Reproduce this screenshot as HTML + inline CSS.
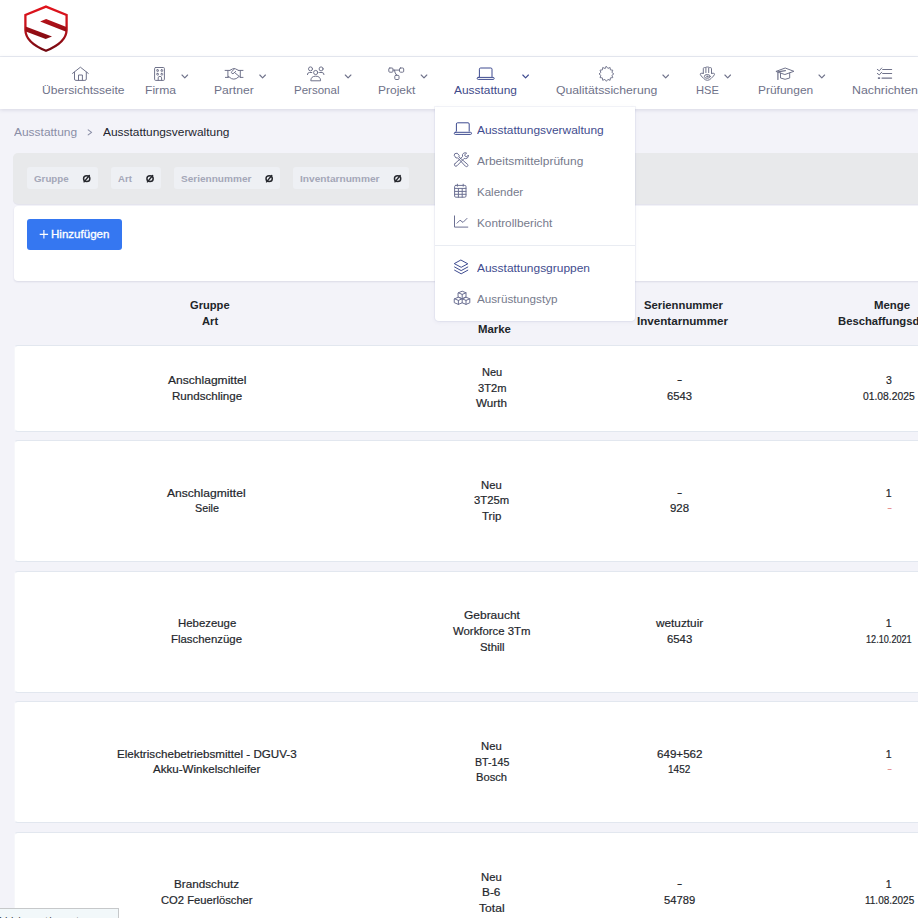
<!DOCTYPE html>
<html lang="de">
<head>
<meta charset="utf-8">
<title>Ausstattungsverwaltung</title>
<style>
html,body{margin:0;padding:0;}
body{width:918px;height:918px;overflow:hidden;position:relative;background:#f3f3f9;font-family:"Liberation Sans",sans-serif;}
.abs{position:absolute;}
.t{position:absolute;white-space:pre;line-height:1;transform-origin:0 50%;font-family:"Liberation Sans",sans-serif;}
#hdr{left:0;top:0;width:918px;height:56px;background:#fff;border-bottom:1px solid #e9ecf2;}
#nav{left:0;top:57px;width:918px;height:52px;background:#fff;box-shadow:0 1px 4px rgba(70,70,120,.16);}
#filt{left:13.4px;top:153px;width:930px;height:50.5px;background:#e8e9eb;border-radius:5px;box-shadow:0 1px 0 rgba(120,120,160,.12);}
.chip{position:absolute;top:167px;height:21.5px;background:#eef0f4;border-radius:3px;}
#card{left:14px;top:205.8px;width:930px;height:75.2px;background:#fff;border-radius:4px;box-shadow:0 1px 2px rgba(70,70,120,.14);}
#btn{left:27px;top:219px;width:95px;height:31px;background:#3577f1;border-radius:3px;}
.row{position:absolute;left:14px;width:930px;background:#fff;border-top:1px solid #e2e7ef;border-bottom:1px solid #e2e7ef;border-left:1px solid #f6f7fa;border-radius:4px;box-sizing:border-box;}
#thline{left:0;top:344.6px;width:918px;height:1px;background:#dfe5ee;}
#dd{left:435px;top:107px;width:200px;height:213.5px;background:#fff;border-radius:0 0 4px 4px;box-shadow:0 0 0 1px rgba(170,175,210,.13),0 1px 4px rgba(90,90,140,.09);z-index:20;}
#ddline{left:435px;top:245px;width:200px;height:1px;background:#e9ecf2;z-index:21;}
#status{left:-1px;top:908px;width:120px;height:12px;overflow:hidden;background:#f2f8fa;border:1px solid #c6c8ca;box-sizing:border-box;z-index:40;}
.st{position:absolute;top:6.5px;font:11px/1 'Liberation Sans',sans-serif;color:#3a3a3a;white-space:pre;}
svg{position:absolute;overflow:visible;}
.ic{fill:none;stroke:#70738b;stroke-width:1.0;stroke-linecap:round;stroke-linejoin:round;}
.ica{fill:none;stroke:#3e4b90;stroke-width:1.0;stroke-linecap:round;stroke-linejoin:round;}
.icd{fill:none;stroke:#6c7093;stroke-width:1.0;stroke-linecap:round;stroke-linejoin:round;}
</style>
</head>
<body>
<div id="hdr" class="abs"></div>
<div id="nav" class="abs"></div>
<!--LOGO-->
<svg class="abs" style="left:0;top:0" width="918" height="918" viewBox="0 0 918 918">
<defs>
<linearGradient id="lg" x1="0" y1="0" x2="0" y2="1"><stop offset="0" stop-color="#e3131c"/><stop offset="0.45" stop-color="#c5121b"/><stop offset="1" stop-color="#6e0810"/></linearGradient>
<linearGradient id="lg2" gradientUnits="userSpaceOnUse" x1="0" y1="5" x2="0" y2="52"><stop offset="0" stop-color="#e3131c"/><stop offset="0.45" stop-color="#c5121b"/><stop offset="1" stop-color="#6e0810"/></linearGradient>
<linearGradient id="lg3" gradientUnits="userSpaceOnUse" x1="0" y1="18" x2="0" y2="40"><stop offset="0" stop-color="#b9121a"/><stop offset="1" stop-color="#7f0a11"/></linearGradient>
</defs>
<!-- logo -->
<path d="M46,6.6 L66.6,15 L66.6,30 Q66.4,42.5 46,50.8 Q25.6,42.5 25.4,30 L25.4,15 Z" fill="none" stroke="url(#lg2)" stroke-width="2.3" stroke-linejoin="miter"/>
<path d="M40.1,21.6 L46.1,19 L66.4,27 L66.2,31.8 Z" fill="url(#lg3)"/>
<path d="M25.6,26.6 L52,36.6 L45.7,38.9 L25.8,31.6 Z" fill="url(#lg3)"/>
<!-- chevrons -->
<g class="ic" style="stroke-width:1.15">
<path d="M182,75 l2.8,2.8 l2.8,-2.8"/>
<path d="M259.8,75 l2.8,2.8 l2.8,-2.8"/>
<path d="M345.3,75 l2.8,2.8 l2.8,-2.8"/>
<path d="M421.2,75 l2.8,2.8 l2.8,-2.8"/>
<path d="M662.9,75 l2.8,2.8 l2.8,-2.8"/>
<path d="M724.9,75 l2.8,2.8 l2.8,-2.8"/>
<path d="M819,75 l2.8,2.8 l2.8,-2.8"/>
</g>
<path class="ica" style="stroke-width:1.15" d="M522.8,75 l2.8,2.8 l2.8,-2.8"/>
<!-- home -->
<g class="ic">
<path d="M72.5,73.4 L80.4,67.2 L88.3,73.4"/>
<path d="M74.5,72.2 V79 Q74.5,80.4 75.9,80.4 H84.9 Q86.3,80.4 86.3,79 V72.2"/>
<path d="M78.5,80.4 V75 H82.4 V80.4"/>
</g>
<!-- firma -->
<g class="ic">
<rect x="154.6" y="67.5" width="9.8" height="12.9" rx="1"/>
<path d="M158.2,80.4 V77.8 Q158.2,76.4 159.9,76.4 Q161.6,76.4 161.6,77.8 V80.4"/>
<g style="stroke-width:.9"><rect x="156.8" y="69.7" width="1.7" height="1.7" rx=".4"/><rect x="161" y="69.7" width="1.7" height="1.7" rx=".4"/><rect x="156.8" y="73.4" width="1.7" height="1.7" rx=".4"/><rect x="161" y="73.4" width="1.7" height="1.7" rx=".4"/></g>
</g>
<!-- partner (handshake) -->
<g class="ic">
<path d="M225.1,70.4 H229.8 M227.9,70.4 V77.4 M225.4,77.4 H228.4"/>
<path d="M238.5,70.4 H243 M240.3,70.4 V77.4 M240.3,77.4 H243"/>
<path d="M229.8,70.4 L232.6,68.9 Q234,68.3 235.4,68.8 L238.5,70.4"/>
<path d="M234.4,69 L231.7,71.6 Q231,72.8 232,73.5 Q233,74 234,73 L235.6,71.4"/>
<path d="M234.7,72.6 L239.2,76.4"/>
<path d="M228.4,76.4 L231.6,78.7 Q233.8,79.6 236.2,78.6 L239.2,76.4"/>
</g>
<!-- personal (users) -->
<g class="ic">
<circle cx="310.5" cy="68.9" r="2"/><circle cx="321.1" cy="68.9" r="2"/><circle cx="315.7" cy="72.5" r="2.1"/>
<path d="M311.8,72.5 H309.4 Q307.4,72.5 307.4,74.6"/>
<path d="M319.6,72.5 H322 Q324,72.5 324,74.6"/>
<path d="M310.8,80.4 Q310.8,76.2 315.7,76.2 Q320.6,76.2 320.6,80.4 Z"/>
</g>
<!-- projekt -->
<g class="ic">
<rect x="388.8" y="68" width="4.2" height="4.2" rx="1"/>
<rect x="399.5" y="68" width="4.2" height="4.2" rx="1"/>
<rect x="394.8" y="75.3" width="4.2" height="4.2" rx="1"/>
<path d="M393,70.1 H399.5 M394.4,70.1 Q394.6,73.4 396.9,75.3"/>
</g>
<!-- ausstattung laptop -->
<g class="ica">
<path d="M479.4,76.6 V69.2 Q479.4,68 480.6,68 H490.8 Q492,68 492,69.2 V76.6"/>
<rect x="477.2" y="77.4" width="17" height="2" rx="1"/>
</g>
<!-- qualitaet badge -->
<g class="ic">
<path d="M606.4,66.5 L607.9,68.4 L610.1,67.5 L610.4,69.9 L612.8,70.2 L611.9,72.4 L613.8,73.9 L611.9,75.4 L612.8,77.6 L610.4,77.9 L610.1,80.3 L607.9,79.4 L606.4,81.3 L604.9,79.4 L602.7,80.3 L602.4,77.9 L600.0,77.6 L600.9,75.4 L599.0,73.9 L600.9,72.4 L600.0,70.2 L602.4,69.9 L602.7,67.5 L604.9,68.4 Z" style="stroke-width:.95"/>
</g>
<!-- hse hamsa -->
<g class="ic">
<path d="M703.3,73.3 V68.6 Q703.3,67.6 704.4,67.6 L705.2,67.6 Q706,67 707.4,67 Q708.8,67 709.6,67.6 L710.4,67.6 Q711.5,67.6 711.5,68.6 V73.3"/>
<path d="M705.9,68 V72.6 M708.7,68 V72.6"/>
<path d="M703.3,73.3 H701.2 Q700.2,73.3 700.3,74.4 Q700.6,75.6 703.6,78.4 Q705.4,80.3 707.4,80.3 Q709.4,80.3 711.2,78.4 Q714.2,75.6 714.5,74.4 Q714.6,73.3 713.6,73.3 H711.5"/>
<ellipse cx="707.3" cy="76.4" rx="2.9" ry="1.9"/>
<circle cx="707.3" cy="76.4" r="0.6"/>
</g>
<!-- pruefungen cap -->
<g class="ic">
<path d="M776.3,71.3 L785.2,68 L793.9,71.3 L785.2,74.4 Z"/>
<path d="M785.4,70.6 L777.9,71.8 V79.4" style="stroke-width:1.2"/>
<path d="M780.5,73 V78 Q785.1,80.6 789.7,78 V73"/>
</g>
<!-- nachrichten list -->
<g class="ic">
<path d="M882.7,69.5 H891.6 M882.7,73.5 H891.6 M882,78.1 H891.6" style="stroke-width:1.2"/>
<path d="M877.3,69.4 L879.3,70.8 L881.7,68 M877.3,73.4 L879.3,74.9 L881.7,72.2"/>
<path d="M878.6,78.1 h0.8" style="stroke-width:1.7"/>
</g>
<!-- breadcrumb chevron -->
<path d="M88.2,129.9 L91.6,132.4 L88.2,134.9" fill="none" stroke="#8a8ea6" stroke-width="1.1" stroke-linecap="round" stroke-linejoin="round"/>
</svg>

<div id="filt" class="abs"></div>
<div class="chip" style="left:26.75px;width:70.75px"></div>
<div class="chip" style="left:110.75px;width:49.75px"></div>
<div class="chip" style="left:173.5px;width:106.5px"></div>
<div class="chip" style="left:293px;width:116px"></div>
<div id="card" class="abs"></div>
<div id="btn" class="abs"></div>
<svg id="plus" style="left:0;top:0" width="918" height="300"><path d="M39.7,234.3 H48.1 M43.9,230.1 V238.5" stroke="#fff" stroke-width="1.15" fill="none"/>
<!-- chip reset icons -->
<g fill="none" stroke="#26282e" stroke-width="1.45" stroke-linecap="round">
<ellipse cx="86.70" cy="178.7" rx="3.15" ry="2.85"/><path d="M84.10,181.85 L89.30,175.55"/>
<ellipse cx="150.05" cy="178.7" rx="3.15" ry="2.85"/><path d="M147.45,181.85 L152.65,175.55"/>
<ellipse cx="269.15" cy="178.7" rx="3.15" ry="2.85"/><path d="M266.55,181.85 L271.75,175.55"/>
<ellipse cx="397.60" cy="178.7" rx="3.15" ry="2.85"/><path d="M395.00,181.85 L400.20,175.55"/>
</g>
</svg>
<div class="row" style="top:345px;height:87px"></div>
<div class="row" style="top:440.2px;height:121.8px"></div>
<div class="row" style="top:570.5px;height:122.3px"></div>
<div class="row" style="top:701px;height:121.8px"></div>
<div class="row" style="top:831.5px;height:121.8px"></div>
<div id="dd" class="abs"></div>
<div id="ddline" class="abs"></div>
<svg class="abs" style="left:0;top:0;z-index:30" width="918" height="918" viewBox="0 0 918 918">
<!-- laptop -->
<g class="ica">
<path d="M456.4,131.2 V124 Q456.4,122.8 457.6,122.8 H468 Q469.2,122.8 469.2,124 V131.2"/>
<rect x="454.3" y="132.3" width="17.2" height="2.1" rx="1"/>
</g>
<!-- tools -->
<g class="icd">
<path d="M455.2,153.6 L457.2,153.2 L459.2,155.4 L458.8,156.8 L467.6,164.4 Q468.4,165.6 467.4,166.4 Q466.4,167 465.4,166.2 L457.6,157.8 L456,158 L454.4,155.6 Z"/>
<path d="M454.8,163.8 L462.6,156.6 Q461.8,154.4 463.6,153.2 Q465.2,152.4 466.6,153 L464.6,155 L465.4,156.4 L466.8,156.8 L468.4,155 Q468.6,157 467.2,158.2 Q465.6,159 464.2,158.4 L457,165.8 Q455.8,166.8 454.8,165.8 Q454,164.8 454.8,163.8 Z"/>
</g>
<!-- calendar -->
<g class="icd">
<rect x="454.6" y="185.4" width="11.4" height="11.8" rx="1.2"/>
<path d="M454.6,188.4 H466 M454.6,191.4 H466 M454.6,194.3 H466 M458.4,188.4 V197.2 M462.2,188.4 V197.2"/>
<path d="M457.4,184.2 V186.2 M463.2,184.2 V186.2"/>
</g>
<!-- chart -->
<g class="icd">
<path d="M454.5,215.9 V227.1 H467.8"/>
<path d="M457,223.2 L460,220.2 L463,222.4 L467,218.4"/>
</g>
<!-- layers -->
<g class="ica">
<path d="M461.2,260.2 L467.8,263.8 L461.2,267.3 L454.6,263.8 Z"/>
<path d="M454.6,267 L461.2,270.6 L467.8,267"/>
<path d="M454.6,270.2 L461.2,273.8 L467.8,270.2"/>
</g>
<!-- cubes -->
<g class="icd">
<path d="M458.4,292.8 L462.2,291.2 L466,292.8 V297 L462.2,298.8 L458.4,297 Z M458.4,292.8 L462.2,294.4 L466,292.8 M462.2,294.4 V298.8"/>
<path d="M454.6,298.8 L458.4,297.2 L462.2,298.8 V302.8 L458.4,304.4 L454.6,302.8 Z M454.6,298.8 L458.4,300.4 L462.2,298.8 M458.4,300.4 V304.4"/>
<path d="M462.2,298.8 L466,297.2 L469.8,298.8 V302.8 L466,304.4 L462.2,302.8 M462.2,298.8 L466,300.4 L469.8,298.8 M466,300.4 V304.4"/>
</g>
</svg>

<span class="t" style="left:42.40px;top:85px;font-size:11px;color:#6f7289;transform:scaleX(1.0984);">Übersichtsseite</span>
<span class="t" style="left:144.60px;top:85px;font-size:11px;color:#6f7289;transform:scaleX(1.1028);">Firma</span>
<span class="t" style="left:214.40px;top:85px;font-size:11px;color:#6f7289;transform:scaleX(1.1004);">Partner</span>
<span class="t" style="left:293.60px;top:85px;font-size:11px;color:#6f7289;transform:scaleX(1.0479);">Personal</span>
<span class="t" style="left:378.10px;top:85px;font-size:11px;color:#6f7289;transform:scaleX(1.0891);">Projekt</span>
<span class="t" style="left:454.30px;top:85px;font-size:11px;color:#3f4b8a;transform:scaleX(1.0827);">Ausstattung</span>
<span class="t" style="left:556.30px;top:85px;font-size:11px;color:#6f7289;transform:scaleX(1.1119);">Qualitätssicherung</span>
<span class="t" style="left:696.30px;top:85px;font-size:11px;color:#6f7289;transform:scaleX(1.0122);">HSE</span>
<span class="t" style="left:757.60px;top:85px;font-size:11px;color:#6f7289;transform:scaleX(1.0873);">Prüfungen</span>
<span class="t" style="left:851.50px;top:85px;font-size:11px;color:#6f7289;transform:scaleX(1.1226);">Nachrichten</span>
<span class="t" style="left:14.30px;top:127px;font-size:10.5px;color:#8a8ea6;transform:scaleX(1.1379);">Ausstattung</span>
<span class="t" style="left:102.60px;top:127px;font-size:10.5px;color:#23252f;transform:scaleX(1.1338);">Ausstattungsverwaltung</span>
<span class="t" style="left:34.40px;top:174px;font-size:9.5px;color:#a4a7b8;font-weight:700;transform:scaleX(1.0272);">Gruppe</span>
<span class="t" style="left:118.30px;top:174px;font-size:9.5px;color:#a4a7b8;font-weight:700;transform:scaleX(1.0121);">Art</span>
<span class="t" style="left:181.00px;top:174px;font-size:9.5px;color:#a4a7b8;font-weight:700;transform:scaleX(1.0581);">Seriennummer</span>
<span class="t" style="left:300.40px;top:174px;font-size:9.5px;color:#a4a7b8;font-weight:700;transform:scaleX(1.0680);">Inventarnummer</span>
<span class="t" style="left:51.30px;top:229px;font-size:10.5px;color:#ffffff;transform:scaleX(1.0993);-webkit-text-stroke:0.3px #fff;">Hinzufügen</span>
<span class="t" style="left:476.70px;top:125px;font-size:10.5px;color:#3f4c8e;transform:scaleX(1.1365);z-index:30;">Ausstattungsverwaltung</span>
<span class="t" style="left:476.70px;top:156px;font-size:10.5px;color:#767a8c;transform:scaleX(1.1382);z-index:30;">Arbeitsmittelprüfung</span>
<span class="t" style="left:476.70px;top:187px;font-size:10.5px;color:#767a8c;transform:scaleX(1.0992);z-index:30;">Kalender</span>
<span class="t" style="left:476.70px;top:218px;font-size:10.5px;color:#767a8c;transform:scaleX(1.1203);z-index:30;">Kontrollbericht</span>
<span class="t" style="left:476.70px;top:263px;font-size:10.5px;color:#3f4c8e;transform:scaleX(1.1385);z-index:30;">Ausstattungsgruppen</span>
<span class="t" style="left:476.70px;top:294px;font-size:10.5px;color:#767a8c;transform:scaleX(1.1123);z-index:30;">Ausrüstungstyp</span>
<span class="t" style="left:190.40px;top:300px;font-size:10.5px;color:#212529;font-weight:700;transform:scaleX(1.0604);">Gruppe</span>
<span class="t" style="left:202.30px;top:316px;font-size:10.5px;color:#212529;font-weight:700;transform:scaleX(1.0612);">Art</span>
<span class="t" style="left:478.40px;top:324px;font-size:10.5px;color:#212529;font-weight:700;transform:scaleX(1.0837);">Marke</span>
<span class="t" style="left:643.50px;top:300px;font-size:10.5px;color:#212529;font-weight:700;transform:scaleX(1.0744);">Seriennummer</span>
<span class="t" style="left:637.00px;top:316px;font-size:10.5px;color:#212529;font-weight:700;transform:scaleX(1.1060);">Inventarnummer</span>
<span class="t" style="left:874.00px;top:300px;font-size:10.5px;color:#212529;font-weight:700;transform:scaleX(1.0852);">Menge</span>
<span class="t" style="left:837.90px;top:316px;font-size:10.5px;color:#212529;font-weight:700;transform:scaleX(1.0729);">Beschaffungsdatum</span>
<span class="t" style="left:167.70px;top:375px;font-size:10.5px;color:#23262b;transform:scaleX(1.1482);-webkit-text-stroke:0.18px #23262b;">Anschlagmittel</span>
<span class="t" style="left:171.80px;top:391px;font-size:10.5px;color:#23262b;transform:scaleX(1.1031);-webkit-text-stroke:0.18px #23262b;">Rundschlinge</span>
<span class="t" style="left:481.80px;top:367px;font-size:10.5px;color:#23262b;transform:scaleX(1.0485);-webkit-text-stroke:0.18px #23262b;">Neu</span>
<span class="t" style="left:477.50px;top:383px;font-size:10.5px;color:#23262b;transform:scaleX(1.0617);-webkit-text-stroke:0.18px #23262b;">3T2m</span>
<span class="t" style="left:476.20px;top:398px;font-size:10.5px;color:#23262b;transform:scaleX(1.1104);-webkit-text-stroke:0.18px #23262b;">Wurth</span>
<span class="t" style="left:676.98px;top:374px;font-size:10.5px;color:#23262b;transform:scaleX(1.5000);-webkit-text-stroke:0.18px #23262b;">-</span>
<span class="t" style="left:667.20px;top:391px;font-size:10.5px;color:#23262b;transform:scaleX(1.0702);-webkit-text-stroke:0.18px #23262b;">6543</span>
<span class="t" style="left:885.88px;top:375px;font-size:10.5px;color:#23262b;-webkit-text-stroke:0.18px #23262b;">3</span>
<span class="t" style="left:862.90px;top:391px;font-size:10.5px;color:#23262b;transform:scaleX(0.9836);-webkit-text-stroke:0.18px #23262b;">01.08.2025</span>
<span class="t" style="left:167.40px;top:488px;font-size:10.5px;color:#23262b;transform:scaleX(1.1511);-webkit-text-stroke:0.18px #23262b;">Anschlagmittel</span>
<span class="t" style="left:194.90px;top:503px;font-size:10.5px;color:#23262b;transform:scaleX(1.0231);-webkit-text-stroke:0.18px #23262b;">Seile</span>
<span class="t" style="left:481.40px;top:480px;font-size:10.5px;color:#23262b;transform:scaleX(1.0745);-webkit-text-stroke:0.18px #23262b;">Neu</span>
<span class="t" style="left:474.20px;top:495px;font-size:10.5px;color:#23262b;transform:scaleX(1.0738);-webkit-text-stroke:0.18px #23262b;">3T25m</span>
<span class="t" style="left:482.10px;top:511px;font-size:10.5px;color:#23262b;transform:scaleX(1.0902);-webkit-text-stroke:0.18px #23262b;">Trip</span>
<span class="t" style="left:676.88px;top:487px;font-size:10.5px;color:#23262b;transform:scaleX(1.5000);-webkit-text-stroke:0.18px #23262b;">-</span>
<span class="t" style="left:670.30px;top:503px;font-size:10.5px;color:#23262b;transform:scaleX(1.0895);-webkit-text-stroke:0.18px #23262b;">928</span>
<span class="t" style="left:885.83px;top:488px;font-size:10.5px;color:#23262b;-webkit-text-stroke:0.18px #23262b;">1</span>
<span class="t" style="left:886.92px;top:502px;font-size:10.5px;color:#e68a8a;transform:scaleX(1.5000);">-</span>
<span class="t" style="left:177.90px;top:618px;font-size:10.5px;color:#23262b;transform:scaleX(1.0853);-webkit-text-stroke:0.18px #23262b;">Hebezeuge</span>
<span class="t" style="left:171.40px;top:634px;font-size:10.5px;color:#23262b;transform:scaleX(1.0860);-webkit-text-stroke:0.18px #23262b;">Flaschenzüge</span>
<span class="t" style="left:463.80px;top:610px;font-size:10.5px;color:#23262b;transform:scaleX(1.1401);-webkit-text-stroke:0.18px #23262b;">Gebraucht</span>
<span class="t" style="left:453.00px;top:626px;font-size:10.5px;color:#23262b;transform:scaleX(1.0827);-webkit-text-stroke:0.18px #23262b;">Workforce 3Tm</span>
<span class="t" style="left:479.50px;top:642px;font-size:10.5px;color:#23262b;transform:scaleX(1.0806);-webkit-text-stroke:0.18px #23262b;">Sthill</span>
<span class="t" style="left:655.90px;top:618px;font-size:10.5px;color:#23262b;transform:scaleX(1.1234);-webkit-text-stroke:0.18px #23262b;">wetuztuir</span>
<span class="t" style="left:667.10px;top:634px;font-size:10.5px;color:#23262b;transform:scaleX(1.0788);-webkit-text-stroke:0.18px #23262b;">6543</span>
<span class="t" style="left:885.83px;top:618px;font-size:10.5px;color:#23262b;-webkit-text-stroke:0.18px #23262b;">1</span>
<span class="t" style="left:866.00px;top:634px;font-size:10.5px;color:#23262b;transform:scaleX(0.8694);-webkit-text-stroke:0.18px #23262b;">12.10.2021</span>
<span class="t" style="left:117.20px;top:749px;font-size:10.5px;color:#23262b;transform:scaleX(1.1078);-webkit-text-stroke:0.18px #23262b;">Elektrischebetriebsmittel - DGUV-3</span>
<span class="t" style="left:153.20px;top:764px;font-size:10.5px;color:#23262b;transform:scaleX(1.1021);-webkit-text-stroke:0.18px #23262b;">Akku-Winkelschleifer</span>
<span class="t" style="left:481.40px;top:741px;font-size:10.5px;color:#23262b;transform:scaleX(1.0745);-webkit-text-stroke:0.18px #23262b;">Neu</span>
<span class="t" style="left:474.60px;top:757px;font-size:10.5px;color:#23262b;transform:scaleX(1.0160);-webkit-text-stroke:0.18px #23262b;">BT-145</span>
<span class="t" style="left:476.20px;top:772px;font-size:10.5px;color:#23262b;transform:scaleX(1.0655);-webkit-text-stroke:0.18px #23262b;">Bosch</span>
<span class="t" style="left:656.90px;top:749px;font-size:10.5px;color:#23262b;transform:scaleX(1.1051);-webkit-text-stroke:0.18px #23262b;">649+562</span>
<span class="t" style="left:668.40px;top:764px;font-size:10.5px;color:#23262b;transform:scaleX(0.9546);-webkit-text-stroke:0.18px #23262b;">1452</span>
<span class="t" style="left:885.83px;top:749px;font-size:10.5px;color:#23262b;-webkit-text-stroke:0.18px #23262b;">1</span>
<span class="t" style="left:886.92px;top:763px;font-size:10.5px;color:#e68a8a;transform:scaleX(1.5000);">-</span>
<span class="t" style="left:174.40px;top:879px;font-size:10.5px;color:#23262b;transform:scaleX(1.1135);-webkit-text-stroke:0.18px #23262b;">Brandschutz</span>
<span class="t" style="left:161.10px;top:895px;font-size:10.5px;color:#23262b;transform:scaleX(1.0676);-webkit-text-stroke:0.18px #23262b;">CO2 Feuerlöscher</span>
<span class="t" style="left:481.40px;top:872px;font-size:10.5px;color:#23262b;transform:scaleX(1.0745);-webkit-text-stroke:0.18px #23262b;">Neu</span>
<span class="t" style="left:482.40px;top:887px;font-size:10.5px;color:#23262b;transform:scaleX(1.1258);-webkit-text-stroke:0.18px #23262b;">B-6</span>
<span class="t" style="left:479.10px;top:903px;font-size:10.5px;color:#23262b;transform:scaleX(1.1538);-webkit-text-stroke:0.18px #23262b;">Total</span>
<span class="t" style="left:676.88px;top:878px;font-size:10.5px;color:#23262b;transform:scaleX(1.5000);-webkit-text-stroke:0.18px #23262b;">-</span>
<span class="t" style="left:664.10px;top:895px;font-size:10.5px;color:#23262b;transform:scaleX(1.0650);-webkit-text-stroke:0.18px #23262b;">54789</span>
<span class="t" style="left:885.83px;top:879px;font-size:10.5px;color:#23262b;-webkit-text-stroke:0.18px #23262b;">1</span>
<span class="t" style="left:864.50px;top:895px;font-size:10.5px;color:#23262b;transform:scaleX(0.9502);-webkit-text-stroke:0.18px #23262b;">11.08.2025</span>
<div id="status" class="abs"><span class="st" style="left:-2px">f</span><span class="st" style="left:5px">hl</span><span class="st" style="left:17px">/</span><span class="st" style="left:45px">t/</span><span class="st" style="left:76px">t</span></div>
</body>
</html>
